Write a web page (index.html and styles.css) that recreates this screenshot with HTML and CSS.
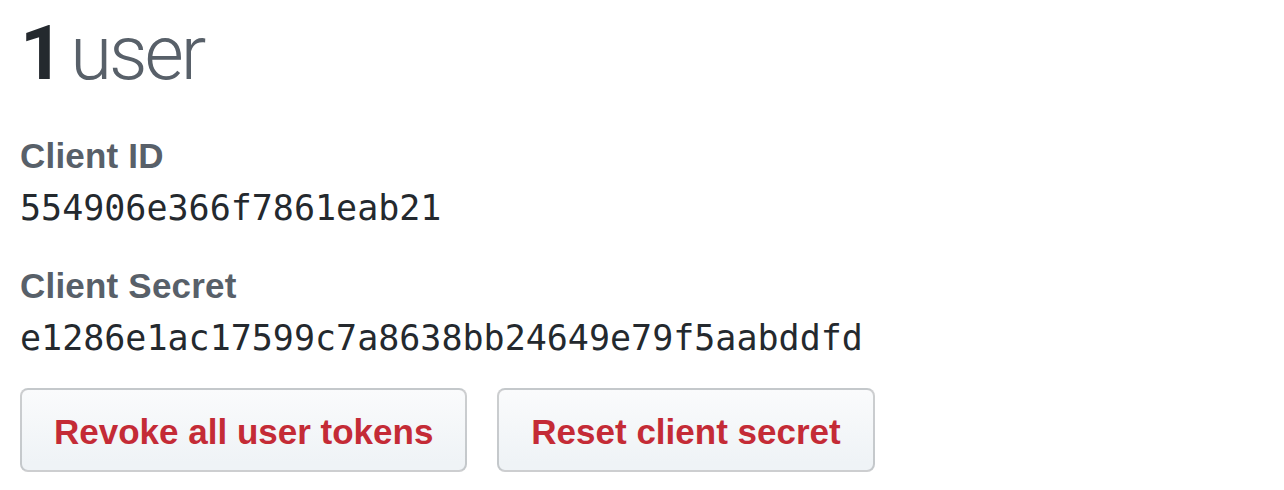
FILE: index.html
```html
<!DOCTYPE html>
<html>
<head>
<meta charset="utf-8">
<link rel="stylesheet" href="styles.css">
</head>
<body>
<main class="app">
  <h2 class="count"><strong class="count-num">1</strong> <span class="count-label">user</span></h2>
  <dl class="creds">
    <dt class="cred-label">Client ID</dt>
    <dd class="cred-value"><code>554906e366f7861eab21</code></dd>
    <dt class="cred-label cred-gap">Client Secret</dt>
    <dd class="cred-value"><code>e1286e1ac17599c7a8638bb24649e79f5aabddfd</code></dd>
  </dl>
  <div class="actions">
    <button class="btn btn-danger" type="button">Revoke all user tokens</button>
    <button class="btn btn-danger" type="button">Reset client secret</button>
  </div>
</main>
</body>
</html>
```

FILE: styles.css
```css
html, body {
  margin: 0;
  padding: 0;
  background: #ffffff;
}

.app {
  padding: 3px 20px 0 20px;
  font-family: "Liberation Sans", Arial, sans-serif;
  color: #24292e;
}

.count {
  margin: 0;
  font-size: 76px;
  line-height: 100px;
  font-weight: 300;
  font-family: Roboto, "Liberation Sans", sans-serif;
  word-spacing: -10px;
}

.count-num {
  font-weight: 700;
  color: #24292e;
  letter-spacing: -2px;
}

.count-label {
  color: #586069;
  letter-spacing: -3px;
}

.creds {
  margin: 28px 0 0 0;
}

.cred-label {
  font-size: 35px;
  line-height: 50px;
  font-weight: 700;
  color: #586069;
  letter-spacing: 0.2px;
}

.cred-gap {
  margin-top: 28px;
}

.cred-value {
  margin: 2px 0 0 0;
}

.cred-value code {
  font-family: "DejaVu Sans Mono", "Liberation Mono", monospace;
  font-size: 35px;
  line-height: 50px;
  color: #24292e;
}

.actions {
  display: flex;
  gap: 30px;
  margin-top: 25px;
}

.btn {
  height: 84px;
  padding: 0 32px;
  border: 2px solid rgba(27, 31, 35, 0.2);
  border-radius: 8px;
  background: linear-gradient(180deg, #fafbfc 0%, #eff3f6 90%);
  font-family: "Liberation Sans", Arial, sans-serif;
  font-size: 35px;
  font-weight: 700;
  color: #c42b36;
  line-height: 84px;
  cursor: pointer;
}
```
